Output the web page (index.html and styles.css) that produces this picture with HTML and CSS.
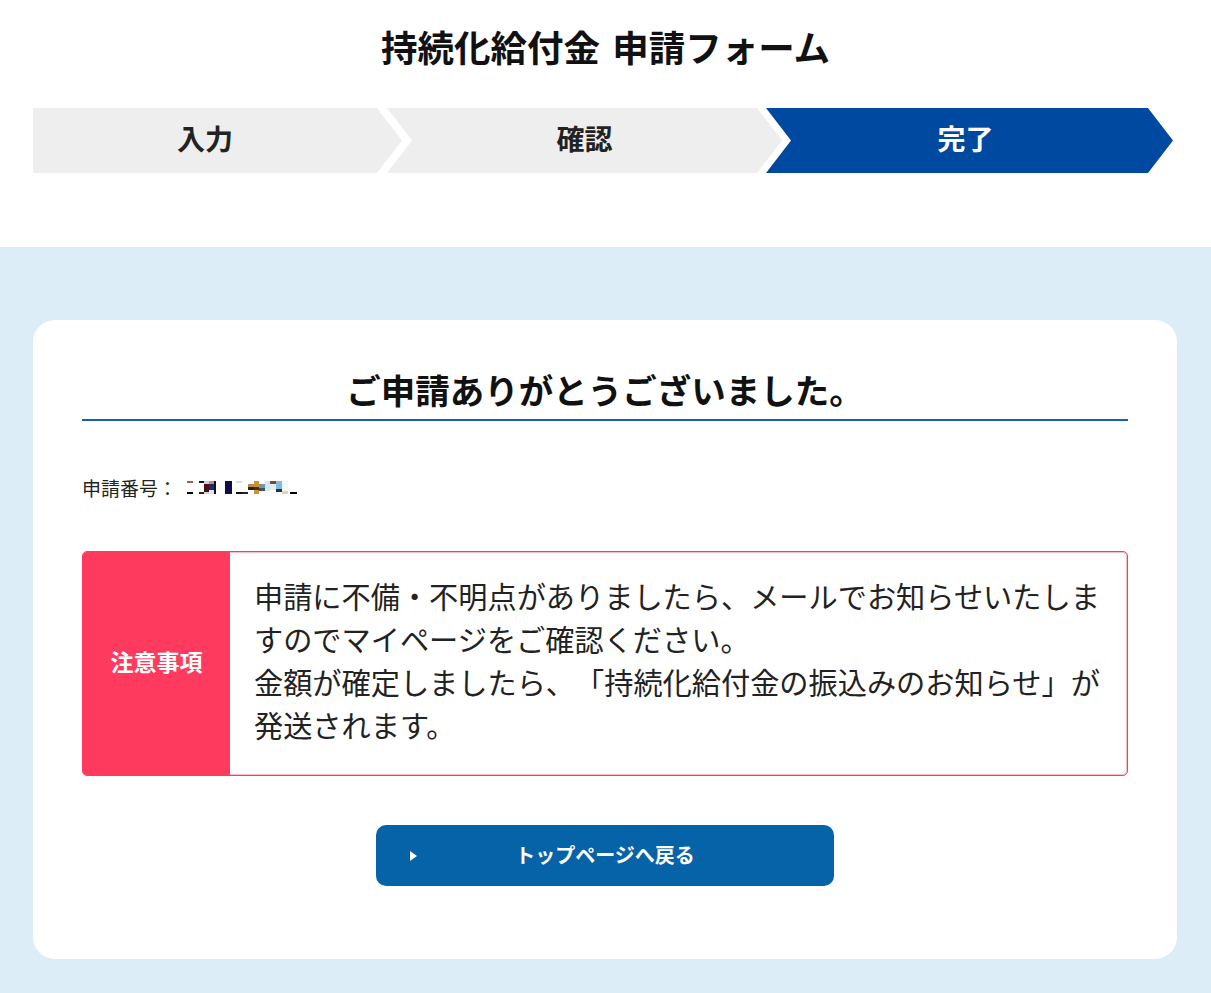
FILE: index.html
```
<!DOCTYPE html>
<html lang="ja">
<head>
<meta charset="utf-8">
<title>持続化給付金 申請フォーム</title>
<link rel="stylesheet" href="styles.css">
</head>
<body>
<header class="header">
  <h1 class="page-title">持続化給付金 申請フォーム</h1>
  <ol class="steps">
    <li class="step step-first">入力</li>
    <li class="step step-mid">確認</li>
    <li class="step step-last step-active">完了</li>
  </ol>
</header>
<main class="main">
  <section class="card">
    <h2 class="card-title">ご申請ありがとうございました。</h2>
    <p class="app-number">申請番号：<svg class="mosaic" width="112" height="16" viewBox="0 0 112 16" aria-hidden="true">
      <rect x="0" y="1" width="6" height="2" fill="#a0604a"/>
      <rect x="0" y="12" width="6" height="2" fill="#000"/>
      <rect x="12" y="1" width="5" height="2" fill="#111"/>
      <rect x="12" y="12" width="5" height="2" fill="#3a1a10"/>
      <rect x="17" y="1" width="5" height="3" fill="#b0d8f0"/>
      <rect x="17" y="4" width="5" height="6" fill="#5a0814"/>
      <rect x="17" y="10" width="5" height="2" fill="#102040"/>
      <rect x="17" y="12" width="5" height="2" fill="#e8d0b0"/>
      <rect x="22" y="1" width="5" height="3" fill="#c09070"/>
      <rect x="22" y="4" width="5" height="6" fill="#1c2870"/>
      <rect x="22" y="10" width="5" height="4" fill="#e0e8f0"/>
      <rect x="27" y="1" width="2" height="13" fill="#111"/>
      <rect x="38" y="1" width="7" height="13" fill="#120c4a"/>
      <rect x="49" y="1" width="6" height="2" fill="#ddd"/>
      <rect x="49" y="12" width="6" height="2" fill="#111"/>
      <rect x="55" y="12" width="6" height="2" fill="#223"/>
      <rect x="61" y="4" width="6" height="6" fill="#c08848"/>
      <rect x="61" y="7" width="6" height="3" fill="#222"/>
      <rect x="67" y="1" width="5" height="13" fill="#d0902c"/>
      <rect x="67" y="7" width="5" height="3" fill="#333"/>
      <rect x="72" y="4" width="6" height="4" fill="#8090a0"/>
      <rect x="72" y="8" width="6" height="3" fill="#405060"/>
      <rect x="78" y="1" width="5" height="10" fill="#c8ecfc"/>
      <rect x="83" y="1" width="6" height="3" fill="#7a4a2a"/>
      <rect x="83" y="4" width="6" height="6" fill="#dfeef8"/>
      <rect x="89" y="1" width="6" height="8" fill="#80b8e0"/>
      <rect x="89" y="9" width="6" height="3" fill="#243040"/>
      <rect x="95" y="1" width="6" height="10" fill="#f0f8fc"/>
      <rect x="95" y="11" width="6" height="3" fill="#f0d0a0"/>
      <rect x="103" y="12" width="7" height="2" fill="#000"/>
    </svg></p>
    <div class="notice">
      <div class="notice-label">注意事項</div>
      <div class="notice-body">申請に不備・不明点がありましたら、メールでお知らせいたしますのでマイページをご確認ください。<br>金額が確定しましたら、「持続化給付金の振込みのお知らせ」が発送されます。</div>
    </div>
    <div class="actions">
      <a class="btn-top" href="#">トップページへ戻る</a>
    </div>
  </section>
</main>
</body>
</html>
```

FILE: styles.css
```
* {
  box-sizing: border-box;
}

html, body {
  margin: 0;
  padding: 0;
}

body {
  font-family: "Noto Sans CJK JP", "Noto Sans", sans-serif;
  color: #222;
  background: #fff;
  text-spacing-trim: space-all;
}

.header {
  padding-top: 22px;
  padding-bottom: 74px;
}

.page-title {
  margin: 0 0 36px;
  font-size: 36.5px;
  line-height: 50px;
  font-weight: 700;
  text-align: center;
  color: #111;
  word-spacing: 4px;
}

.steps {
  list-style: none;
  margin: 0;
  padding: 0 0 0 33px;
  display: flex;
  height: 65px;
}

.step {
  display: flex;
  align-items: center;
  justify-content: center;
  height: 65px;
  padding-bottom: 5px;
  background: #eeeeee;
  color: #222;
  font-size: 28px;
  font-weight: 700;
}

.step-first {
  width: 369px;
  padding-right: 25px;
  clip-path: polygon(0 0, 344px 0, 369px 50%, 344px 100%, 0 100%);
}

.step-mid {
  width: 395px;
  margin-left: -15px;
  padding-left: 25px;
  padding-right: 25px;
  clip-path: polygon(0 0, 370px 0, 395px 50%, 370px 100%, 0 100%, 25px 50%);
}

.step-last {
  width: 407px;
  margin-left: -16px;
  padding-left: 25px;
  padding-right: 33px;
  clip-path: polygon(0 0, 382px 0, 407px 50%, 382px 100%, 0 100%, 25px 50%);
}

.step-active {
  background: #0049a0;
  color: #fff;
}

.main {
  background: #dcedf7;
  padding: 73px 34px 73px 33px;
}

.card {
  background: #fff;
  border-radius: 22px;
  padding: 45px 49px 73px;
}

.card-title {
  margin: 0;
  padding-bottom: 6px;
  border-bottom: 2px solid #1560ab;
  font-size: 34.5px;
  line-height: 48px;
  font-weight: 700;
  text-align: center;
  color: #111;
}

.app-number {
  margin: 54px 0 0;
  font-size: 19px;
  line-height: 26px;
  display: flex;
  align-items: center;
}

.mosaic {
  display: block;
  margin-left: 10px;
}

.notice {
  margin-top: 50px;
  display: flex;
  border: 1px solid #ff3a5f;
  border-radius: 5px;
  box-shadow: inset 0 0 0 1px rgba(255, 58, 95, 0.35);
}

.notice-label {
  flex: 0 0 147px;
  background: #ff3a5f;
  border-radius: 4px 0 0 4px;
  color: #fff;
  font-size: 23px;
  font-weight: 700;
  display: flex;
  align-items: center;
  justify-content: center;
  padding-bottom: 5px;
}

.notice-body {
  flex: 1;
  padding: 22px 18px 29px 24px;
  font-size: 29.2px;
  line-height: 43px;
  color: #222;
}

.actions {
  margin-top: 49px;
  display: flex;
  justify-content: center;
}

.btn-top {
  position: relative;
  display: flex;
  align-items: center;
  justify-content: center;
  width: 458px;
  height: 61px;
  padding-bottom: 3px;
  background: #0763a8;
  border-radius: 10px;
  color: #fff;
  font-size: 20px;
  font-weight: 700;
  text-decoration: none;
}

.btn-top::before {
  content: "";
  position: absolute;
  left: 34px;
  top: 50%;
  margin-top: -5px;
  border-left: 7px solid #fff;
  border-top: 5px solid transparent;
  border-bottom: 5px solid transparent;
}
```
